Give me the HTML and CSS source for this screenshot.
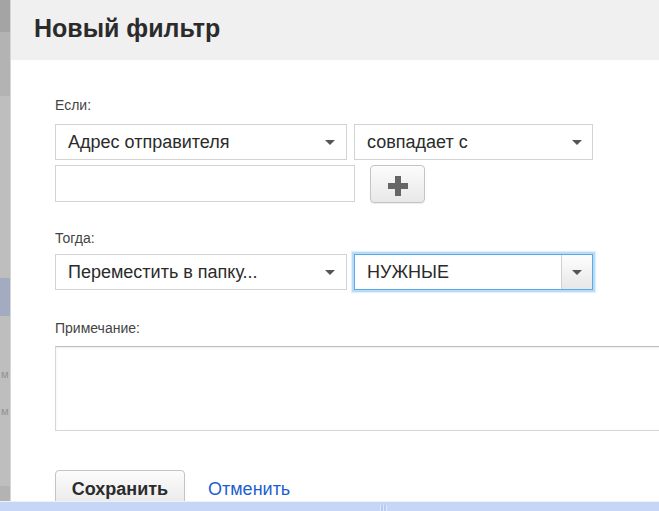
FILE: index.html
```html
<!DOCTYPE html>
<html lang="ru">
<head>
<meta charset="utf-8">
<title>Новый фильтр</title>
<link rel="stylesheet" href="styles.css">
</head>
<body>
<div class="screen">
  <div class="main">
    <aside class="strip">
      <div class="strip-top"></div>
      <div class="strip-mid"></div>
      <div class="strip-gap1"></div>
      <div class="strip-active"></div>
      <div class="strip-text t1">м</div>
      <div class="strip-text t2">м</div>
      <div class="strip-fill"></div>
      <div class="strip-bottom"></div>
    </aside>
    <section class="dialog">
      <header class="dlg-head">
        <h1 class="dlg-title">Новый фильтр</h1>
      </header>
      <div class="dlg-body">
        <div class="label">Если:</div>
        <div class="row row-first">
          <div class="select sel-wide"><span class="sel-text">Адрес отправителя</span><i class="caret"></i></div>
          <div class="select sel-narrow"><span class="sel-text">совпадает с</span><i class="caret"></i></div>
        </div>
        <div class="row row-add">
          <div class="input"></div>
          <button class="btn btn-plus" type="button" aria-label="Добавить">
            <svg width="20" height="20" viewBox="0 0 20 20"><rect x="0" y="7" width="20" height="6" fill="#666"/><rect x="7" y="0" width="6" height="20" fill="#666"/></svg>
          </button>
        </div>
        <div class="label label-then">Тогда:</div>
        <div class="row row-then">
          <div class="select sel-wide"><span class="sel-text">Переместить в папку...</span><i class="caret"></i></div>
          <div class="select sel-narrow sel-focus"><span class="sel-text">НУЖНЫЕ</span><span class="dd"><i class="caret caret-dd"></i></span></div>
        </div>
        <div class="label label-note">Примечание:</div>
        <div class="textarea"></div>
        <div class="actions">
          <button class="btn btn-save" type="button">Сохранить</button>
          <a class="link" href="#">Отменить</a>
        </div>
      </div>
    </section>
  </div>
  <div class="taskbar"><span class="grip"></span></div>
</div>
</body>
</html>
```
FILE: styles.css
```css
html, body {
  margin: 0;
  padding: 0;
  background: #fff;
}
body {
  font-family: "Liberation Sans", Arial, sans-serif;
  color: #333;
}
.screen {
  width: 659px;
  height: 511px;
  display: flex;
  flex-direction: column;
  overflow: hidden;
}
.main {
  flex: 1;
  min-height: 0;
  display: flex;
}

/* left strip (background app) */
.strip {
  width: 10px;
  flex: none;
  border-right: 1px solid #d6d6d6;
  background: #bebebe;
  display: flex;
  flex-direction: column;
}
.strip-top { height: 32px; background: #a4a4a4; }
.strip-mid { height: 64px; background: #b3b3b3; }
.strip-gap1 { height: 182px; }
.strip-active { height: 38px; background: #a3abc1; }
.strip-text {
  height: 16px;
  font-size: 11px;
  line-height: 16px;
  color: #939393;
  white-space: nowrap;
  padding-left: 1px;
}
.t1 { margin-top: 50px; }
.t2 { margin-top: 21px; }
.strip-fill { flex: 1; }
.strip-bottom { height: 15px; background: #b3b3b3; }

/* dialog */
.dialog {
  flex: 1;
  min-width: 0;
  background: #fff;
  overflow: hidden;
}
.dlg-head {
  height: 60px;
  box-sizing: border-box;
  background: #f0f0f0;
  padding: 13px 0 0 23px;
}
.dlg-title {
  margin: 0;
  font-size: 25px;
  line-height: 30px;
  font-weight: bold;
  color: #2b2b2b;
}
.dlg-body {
  padding: 37px 0 0 44px;
}
.label {
  font-size: 14px;
  line-height: 16px;
  color: #444;
}
.label-then { margin-top: 27px; }
.label-note { margin-top: 30px; }

.row {
  display: flex;
  align-items: flex-start;
  gap: 7px;
}
.row-first { margin-top: 11px; }
.row-add { margin-top: 5px; gap: 15px; }
.row-then { margin-top: 8px; }

.select {
  height: 36px;
  box-sizing: border-box;
  border: 1px solid #d3d3d3;
  background: #fff;
  display: flex;
  align-items: center;
  padding-left: 12px;
  font-size: 18px;
  color: #2b2b2b;
  white-space: nowrap;
}
.sel-wide { width: 292px; }
.sel-narrow { width: 239px; }
.sel-text { flex: 1; }
.caret {
  display: block;
  width: 0;
  height: 0;
  border-top: 5px solid #555;
  border-left: 5px solid transparent;
  border-right: 5px solid transparent;
  margin-right: 11px;
}
.sel-narrow .caret { margin-right: 10px; }
.sel-focus {
  border-color: #5aaae8;
  box-shadow: 0 0 0 2px #b9dcf6, 0 0 1px 3px #e0f0fc;
}
.dd {
  align-self: stretch;
  width: 30px;
  border-left: 1px solid #d0d0d0;
  background: linear-gradient(#fefefe, #e7e7e7);
  display: flex;
  align-items: center;
  justify-content: center;
}
.sel-focus .caret-dd { margin: 0; }

.input {
  width: 300px;
  height: 37px;
  box-sizing: border-box;
  border: 1px solid #d3d3d3;
  background: #fff;
}

.btn {
  box-sizing: border-box;
  border: 1px solid #c4c4c4;
  border-radius: 4px;
  background: linear-gradient(#fcfcfc, #e8e8e8);
  box-shadow: 0 1px 1px rgba(0, 0, 0, 0.08);
  font-family: inherit;
  padding: 0;
  margin: 0;
  display: flex;
  align-items: center;
  justify-content: center;
  cursor: pointer;
}
.btn-plus {
  width: 55px;
  height: 38px;
}
.btn-plus svg { display: block; margin-top: 3px; }

.textarea {
  margin-top: 10px;
  width: 640px;
  height: 85px;
  box-sizing: border-box;
  border: 1px solid #d6d6d6;
  border-top-color: #bdbdbd;
  box-shadow: inset 0 1px 2px rgba(0, 0, 0, 0.08);
  background: #fff;
}

.actions {
  margin-top: 39px;
  display: flex;
  align-items: center;
  gap: 23px;
}
.btn-save {
  width: 130px;
  height: 38px;
  font-size: 18px;
  font-weight: bold;
  color: #2b2b2b;
}
.link {
  font-size: 18px;
  color: #1d5fd0;
  text-decoration: none;
}

.taskbar {
  height: 9px;
  flex: none;
  border-top: 1px solid #eef1f6;
  background: #c6d6f6;
  position: relative;
}
.grip {
  position: absolute;
  left: 380px;
  top: 3px;
  width: 7px;
  height: 6px;
  background: repeating-linear-gradient(90deg, #dde8fc 0 1px, #b8cbf0 1px 3px);
}
```
